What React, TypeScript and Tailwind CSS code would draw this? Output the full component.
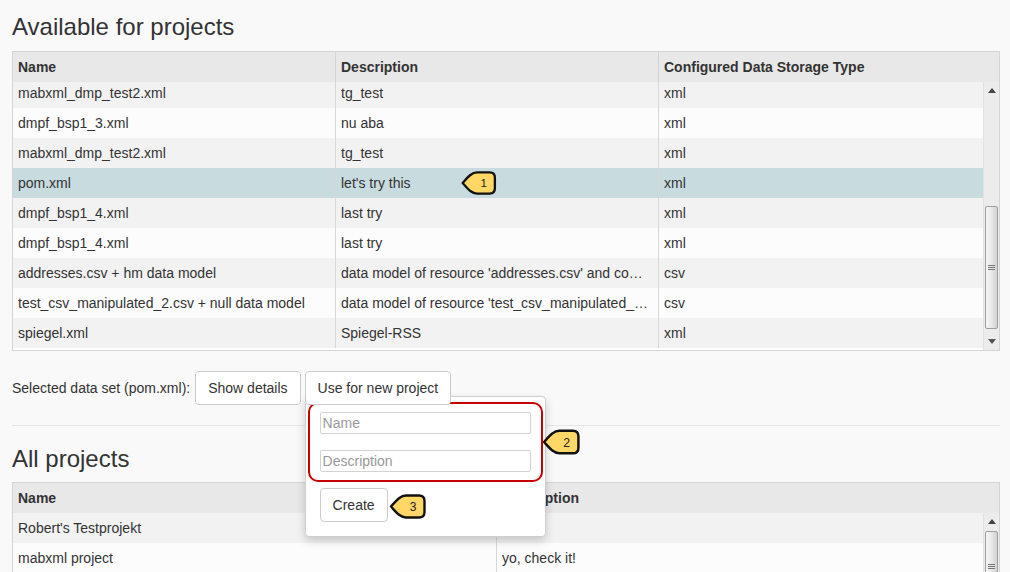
import React from "react"

const font = "font-['Liberation_Sans',Arial,sans-serif]"

const available = [
  ["mabxml_dmp_test2.xml", "tg_test", "xml"],
  ["dmpf_bsp1_3.xml", "nu aba", "xml"],
  ["mabxml_dmp_test2.xml", "tg_test", "xml"],
  ["pom.xml", "let's try this", "xml"],
  ["dmpf_bsp1_4.xml", "last try", "xml"],
  ["dmpf_bsp1_4.xml", "last try", "xml"],
  ["addresses.csv + hm data model", "data model of resource 'addresses.csv' and co…", "csv"],
  ["test_csv_manipulated_2.csv + null data model", "data model of resource 'test_csv_manipulated_…", "csv"],
  ["spiegel.xml", "Spiegel-RSS", "xml"],
]

const projects = [
  ["Robert's Testprojekt", ""],
  ["mabxml project", "yo, check it!"],
]

const Callout = ({ n, w = 38, h = 27 }: { n: number; w?: number; h?: number }) => (
  <svg width={w} height={h} viewBox="0 0 38 27">
    <path
      d="M2 13.5 C7 8 11 2.5 17 2.5 H30 Q35.5 2.5 35.5 8 V19 Q35.5 24.5 30 24.5 H17 C11 24.5 7 19 2 13.5 Z"
      fill="#fed766"
      stroke="#111"
      strokeWidth="2.4"
      strokeLinejoin="round"
    />
    <text x="24" y="18" fontSize="12" textAnchor="middle" fill="#222" fontFamily="Liberation Sans, Arial, sans-serif">
      {n}
    </text>
  </svg>
)

const Arrow = ({ down }: { down?: boolean }) => (
  <div className="h-[17px] flex items-center justify-center">
    <svg width="8" height="5" viewBox="0 0 8 5">
      {down ? <path d="M0 0 H8 L4 5 Z" fill="#555" /> : <path d="M0 5 H8 L4 0 Z" fill="#444" />}
    </svg>
  </div>
)

const Thumb = ({ height }: { height: number | string }) => (
  <div
    className="mx-[1px] rounded-[2px] border border-[#9e9e9e] bg-gradient-to-r from-[#f6f6f6] via-[#e8e8e8] to-[#d2d2d2] flex items-center justify-center"
    style={{ height }}
  >
    <div className="flex flex-col gap-[1px]">
      <div className="w-[7px] h-[1px] bg-[#777]" />
      <div className="w-[7px] h-[1px] bg-[#777]" />
      <div className="w-[7px] h-[1px] bg-[#777]" />
    </div>
  </div>
)

const cell = "h-full leading-[30px] px-[5px] overflow-hidden whitespace-nowrap text-ellipsis"

export default function App() {
  return (
    <div className={`h-screen overflow-hidden bg-[#f9f9f9] pl-[12px] pr-[10px] pt-[14px] text-[14px] text-[#333] ${font}`}>
      <h3 className="text-[24px] leading-[26px] mb-[11px]">Available for projects</h3>

      {/* available data sets */}
      <div className="border border-[#d4d4d4] bg-white">
        <div className="flex h-[30px] bg-[#e8e8e8] font-bold">
          <div className={`${cell} w-[323px] border-r border-[#d4d4d4]`}>Name</div>
          <div className={`${cell} w-[323px] border-r border-[#d4d4d4]`}>Description</div>
          <div className={`${cell} flex-1`}>Configured Data Storage Type</div>
        </div>
        <div className="flex h-[268px]">
          <div className="flex-1 overflow-hidden">
            <div className="-mt-[4px]">
              {available.map((r, i) => {
                const selected = r[0] === "pom.xml"
                const bg = selected ? "bg-[#c8dbdf]" : i % 2 === 0 ? "bg-[#f2f2f2]" : "bg-[#fcfcfc]"
                return (
                  <div key={i} className={`flex h-[30px] ${bg}`}>
                    <div className={`${cell} w-[323px] shrink-0 border-r border-[#d8d8d8]`}>{r[0]}</div>
                    <div className="relative w-[323px] shrink-0 h-full border-r border-[#d8d8d8]">
                      <div className={`${cell} w-full`}>{r[1]}</div>
                      {selected && (
                        <div className="absolute left-[124px] top-[2px]">
                          <Callout n={1} w={38} h={26} />
                        </div>
                      )}
                    </div>
                    <div className={`${cell} flex-1`}>{r[2]}</div>
                  </div>
                )
              })}
            </div>
          </div>
          <div className="w-[16px] flex flex-col bg-[#ececec] border-l border-[#e2e2e2]">
            <Arrow />
            <div className="h-[107px]" />
            <Thumb height={123} />
            <div className="flex-1" />
            <Arrow down />
          </div>
        </div>
      </div>

      {/* actions */}
      <div className="flex items-center mt-[20px]">
        <span className="mr-[5px]">Selected data set (pom.xml):</span>
        <button className="h-[34px] px-[12px] border border-[#ccc] rounded-[4px] bg-white text-[#333] mr-[4px]">
          Show details
        </button>
        <div className="relative">
          <button className="relative z-20 h-[34px] px-[12px] border border-[#ccc] rounded-[4px] bg-white text-[#333]">
            Use for new project
          </button>
          <div className="absolute z-10 left-0 top-[25px] w-[241px] bg-white border border-[#cfcfcf] rounded-[4px] shadow-[0_4px_10px_rgba(0,0,0,0.18)] pt-[5px] pb-[14px]">
            <div className="mx-[2px] border-2 border-[#c80000] rounded-[10px] px-[10px] py-[8px] flex flex-col gap-[16px]">
              <input
                placeholder="Name"
                className="h-[22px] w-full border border-[#d3d3d3] rounded-[2px] px-[2px] text-[14px] bg-white placeholder:text-[#999] outline-none"
              />
              <input
                placeholder="Description"
                className="h-[22px] w-full border border-[#d3d3d3] rounded-[2px] px-[2px] text-[14px] bg-white placeholder:text-[#999] outline-none"
              />
            </div>
            <div className="flex items-center mt-[6px] pl-[14px]">
              <button className="h-[34px] px-[12px] border border-[#ccc] rounded-[4px] bg-white text-[#333]">
                Create
              </button>
              <div className="ml-[1px] mt-[2px]">
                <Callout n={3} />
              </div>
            </div>
            <div className="absolute left-[236px] top-[31px]">
              <Callout n={2} w={39} h={28} />
            </div>
          </div>
        </div>
      </div>

      <hr className="mt-[20px] border-0 border-t border-[#e6e6e6]" />

      <h3 className="text-[24px] leading-[26px] mt-[20px] mb-[10px]">All projects</h3>

      {/* all projects */}
      <div className="border border-[#d4d4d4] bg-white">
        <div className="flex h-[30px] bg-[#e8e8e8] font-bold">
          <div className={`${cell} w-[484px] border-r border-[#d4d4d4]`}>Name</div>
          <div className={`${cell} flex-1`}>Description</div>
        </div>
        <div className="flex h-[90px]">
          <div className="flex-1 overflow-hidden">
            {projects.map((r, i) => (
              <div key={i} className={`flex h-[30px] ${i % 2 === 0 ? "bg-[#f2f2f2]" : "bg-[#fcfcfc]"}`}>
                <div className={`${cell} w-[484px] shrink-0 border-r border-[#d8d8d8]`}>{r[0]}</div>
                <div className={`${cell} flex-1`}>{r[1]}</div>
              </div>
            ))}
          </div>
          <div className="w-[16px] flex flex-col bg-[#ececec] border-l border-[#e2e2e2]">
            <Arrow />
            <div className="h-[1px]" />
            <Thumb height={70} />
            <div className="flex-1" />
          </div>
        </div>
      </div>
    </div>
  )
}
